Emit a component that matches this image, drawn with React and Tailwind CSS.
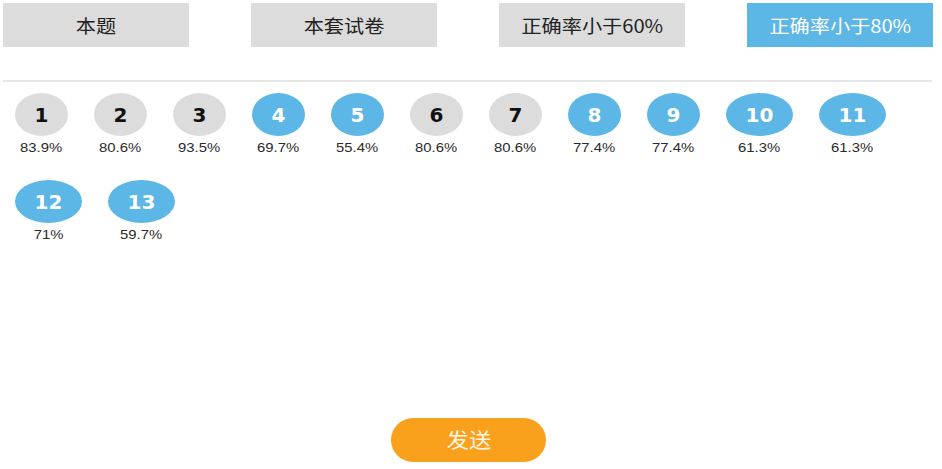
import React from 'react'

const tabs = [
  { label: '本题', active: false },
  { label: '本套试卷', active: false },
  { label: '正确率小于60%', active: false },
  { label: '正确率小于80%', active: true },
]

const items = [
  { n: 1, rate: '83.9%', low: false },
  { n: 2, rate: '80.6%', low: false },
  { n: 3, rate: '93.5%', low: false },
  { n: 4, rate: '69.7%', low: true },
  { n: 5, rate: '55.4%', low: true },
  { n: 6, rate: '80.6%', low: false },
  { n: 7, rate: '80.6%', low: false },
  { n: 8, rate: '77.4%', low: true },
  { n: 9, rate: '77.4%', low: true },
  { n: 10, rate: '61.3%', low: true },
  { n: 11, rate: '61.3%', low: true },
  { n: 12, rate: '71%', low: true },
  { n: 13, rate: '59.7%', low: true },
]

const cjk = { fontFamily: '"Noto Sans CJK SC", "Liberation Sans", sans-serif' }

export default function App() {
  return (
    <div className="w-[942px] h-[469px] bg-white flex flex-col overflow-hidden">
      <div className="flex gap-[62px] pl-[3px] pt-[3px]">
        {tabs.map(t => (
          <div
            key={t.label}
            className={
              t.active
                ? 'w-[186px] h-[44px] flex items-center justify-center bg-[#5cb6e6] text-white'
                : 'w-[186px] h-[44px] flex items-center justify-center bg-[#dcdcdc] text-[#222]'
            }
          >
            <span className="inline-block text-[18px] leading-none scale-x-[1.12]" style={cjk}>{t.label}</span>
          </div>
        ))}
      </div>

      <div className="mt-[33px] ml-[3px] w-[929px] h-[2px] bg-[#e6e6e6]" />

      <div className="flex flex-wrap pl-[15px] pt-[11px] gap-x-[26px] gap-y-[24px] w-[920px]">
        {items.map(it => (
          <div key={it.n} className="flex flex-col items-center">
            <div
              className={
                (it.n >= 10 ? 'w-[67px] ' : 'w-[53px] ') +
                (it.low
                  ? 'h-[43px] rounded-[50%] flex items-center justify-center bg-[#5cb6e6] text-white'
                  : 'h-[43px] rounded-[50%] flex items-center justify-center bg-[#dcdcdc] text-[#111]')
              }
            >
              <span className="text-[20px] font-bold leading-none font-['DejaVu_Sans',sans-serif]">{it.n}</span>
            </div>
            <div className="mt-[4px] h-[16px] flex items-center">
              <span className="inline-block text-[13.5px] leading-none text-[#2a2a2a] scale-x-[1.1] font-['Liberation_Sans',Arial,sans-serif]">{it.rate}</span>
            </div>
          </div>
        ))}
      </div>

      <div className="flex-1" />

      <div className="flex justify-center pr-[5px] pb-[7px]">
        <button className="w-[155px] h-[44px] rounded-full bg-[#f9a01c] text-[#fff6e6] flex items-center justify-center">
          <span className="inline-block text-[20px] leading-none scale-x-[1.12]" style={cjk}>发送</span>
        </button>
      </div>
    </div>
  )
}
